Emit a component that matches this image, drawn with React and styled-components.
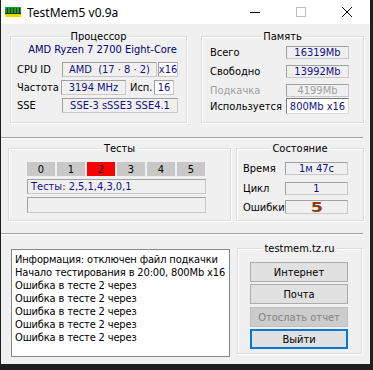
import styled, { createGlobalStyle } from "styled-components";

const GlobalStyle = createGlobalStyle`
  html, body {
    margin: 0;
    padding: 0;
    background: #1e1e1e;
  }
  body {
    font-family: "DejaVu Sans Condensed", "DejaVu Sans", sans-serif;
    font-size: 11px;
    color: #000;
  }
`;

const Window = styled.div`
  width: 369px;
  height: 364px;
  margin-left: 1px;
  background: #f0f0f0;
  display: flex;
  flex-direction: column;
  overflow: hidden;
`;

const TitleBar = styled.div`
  height: 24px;
  background: #fff;
  display: flex;
  align-items: center;
  flex-shrink: 0;
`;

const AppIcon = styled.svg`
  margin-left: 4px;
  margin-right: 6px;
`;

const Title = styled.div`
  flex: 1;
  font-family: "Noto Sans", "Open Sans", sans-serif;
  font-size: 12px;
  color: #000;
`;

const Control = styled.div`
  width: 46px;
  height: 24px;
  display: flex;
  align-items: center;
  justify-content: center;
`;

const Row = styled.div`
  display: flex;
  padding-left: ${(p) => p.$pl}px;
  margin-top: ${(p) => p.$mt}px;
  gap: ${(p) => p.$gap}px;
`;

const Separator = styled.div`
  width: 362px;
  height: 1px;
  background: #a0a0a0;
  border-bottom: 1px solid #fff;
  margin-top: ${(p) => p.$mt}px;
`;

const Group = styled.div`
  position: relative;
  box-sizing: border-box;
  width: ${(p) => p.$w}px;
  height: ${(p) => p.$h}px;
  border: 1px solid #dcdcdc;
  box-shadow: inset 1px 1px 0 #fff, 1px 1px 0 #fff;
  padding: ${(p) => p.$pad || "0"};
`;

const Caption = styled.div`
  position: absolute;
  top: -7px;
  left: 50%;
  transform: translateX(-50%);
  background: #f0f0f0;
  padding: 0 2px;
  line-height: 13px;
  white-space: nowrap;
`;

const CpuName = styled.div`
  text-align: center;
  color: #000080;
  line-height: 14px;
  margin-top: 6px;
  padding-left: 8px;
`;

const FormRow = styled.div`
  display: flex;
  align-items: center;
  margin-top: ${(p) => p.$mt}px;
  padding-left: ${(p) => p.$pl || 0}px;
`;

const Label = styled.div`
  width: ${(p) => p.$w}px;
  flex-shrink: 0;
  padding-left: ${(p) => p.$pl || 0}px;
  box-sizing: border-box;
  color: ${(p) => (p.$disabled ? "#a0a0a0" : "#000")};
  white-space: nowrap;
`;

const Field = styled.div`
  box-sizing: border-box;
  width: ${(p) => p.$w}px;
  height: ${(p) => p.$h || 15}px;
  margin-left: ${(p) => p.$ml || 0}px;
  border: 1px solid #c8c8c8;
  border-top-color: #a0a0a0;
  border-left-color: #a0a0a0;
  background: ${(p) => (p.$white ? "#fff" : "#f0f0f0")};
  color: ${(p) => (p.$disabled ? "#a0a0a0" : "#10108a")};
  display: flex;
  align-items: center;
  justify-content: ${(p) => (p.$left ? "flex-start" : "center")};
  padding-left: ${(p) => (p.$left ? 3 : 0)}px;
  white-space: nowrap;
  line-height: 1;
  flex-shrink: 0;
`;

const StrongField = styled(Field)`
  border: 1px solid #7a7a7a;
  border-right-color: #dcdcdc;
  border-bottom-color: #dcdcdc;
`;

const ErrorCount = styled.span`
  font-family: "DejaVu Sans", sans-serif;
  font-weight: bold;
  font-size: 14px;
  color: #8e3a10;
  transform: scaleX(1.25);
`;

const Cells = styled.div`
  display: flex;
  gap: 2px;
  margin-top: 13px;
`;

const Cell = styled.div`
  width: 28px;
  height: 14px;
  background: ${(p) => (p.$active ? "#ff0000" : "#c8c8c8")};
  display: flex;
  align-items: center;
  justify-content: center;
  line-height: 1;
`;

const LogBox = styled.div`
  box-sizing: border-box;
  width: 219px;
  height: 108px;
  margin-top: 1px;
  background: #fff;
  border: 1px solid #828790;
  padding: 3px 0 0 3px;
  line-height: 13px;
  letter-spacing: -0.15px;
  white-space: nowrap;
  overflow: hidden;
`;

const Button = styled.div`
  box-sizing: border-box;
  width: 98px;
  height: 20px;
  margin-top: ${(p) => p.$mt}px;
  background: ${(p) => (p.$disabled ? "#cccccc" : "#e1e1e1")};
  border: ${(p) => (p.$focused ? "2px solid #0078d7" : p.$disabled ? "1px solid #bfbfbf" : "1px solid #adadad")};
  color: ${(p) => (p.$disabled ? "#838383" : "#000")};
  display: flex;
  align-items: center;
  justify-content: center;
`;

const Column = styled.div`
  display: flex;
  flex-direction: column;
`;

const logLines = [
  "Информация: отключен файл подкачки",
  "Начало тестирования в 20:00, 800Mb x16",
  "Ошибка в тесте 2 через",
  "Ошибка в тесте 2 через",
  "Ошибка в тесте 2 через",
  "Ошибка в тесте 2 через",
  "Ошибка в тесте 2 через",
];

const App = () => {
  return (
    <>
      <GlobalStyle />
      <Window>
        <TitleBar>
          <AppIcon width="16" height="10" viewBox="0 0 16 10">
            <rect x="0" y="0" width="16" height="7" fill="#1f9a2a" />
            <rect x="0" y="7" width="16" height="3" fill="#e8d800" />
            {[2, 5, 8, 11, 14].map((x) => (
              <rect key={x} x={x} y="1" width="1" height="5" fill="#0b3d10" />
            ))}
            <rect x="0" y="6" width="16" height="1" fill="#0b3d10" />
          </AppIcon>
          <Title>TestMem5 v0.9a</Title>
          <Control>
            <svg width="10" height="1" viewBox="0 0 10 1">
              <rect width="10" height="1" fill="#000" />
            </svg>
          </Control>
          <Control>
            <svg width="10" height="10" viewBox="0 0 10 10">
              <rect x="0.5" y="0.5" width="9" height="9" fill="none" stroke="#c0c0c0" />
            </svg>
          </Control>
          <Control>
            <svg width="10" height="10" viewBox="0 0 10 10">
              <path d="M0 0L10 10M10 0L0 10" stroke="#000" strokeWidth="1" />
            </svg>
          </Control>
        </TitleBar>

        <Row $pl={9} $mt={12} $gap={14}>
          <Group $w={177} $h={87}>
            <Caption>Процессор</Caption>
            <CpuName>AMD Ryzen 7 2700 Eight-Core</CpuName>
            <FormRow $mt={5} $pl={6}>
              <Label $w={45}>CPU ID</Label>
              <Field $w={95}>AMD&nbsp;&nbsp;(17 · 8 · 2)</Field>
              <Field $w={20} $ml={1} $white>x16</Field>
            </FormRow>
            <FormRow $mt={3} $pl={6}>
              <Label $w={44}>Частота</Label>
              <Field $w={65}>3194 MHz</Field>
              <Label $w={28} $pl={4}>Исп.</Label>
              <Field $w={20} $white>16</Field>
            </FormRow>
            <FormRow $mt={3} $pl={6}>
              <Label $w={45}>SSE</Label>
              <Field $w={116}>SSE-3 sSSE3 SSE4.1</Field>
            </FormRow>
          </Group>

          <Group $w={163} $h={87}>
            <Caption>Память</Caption>
            <FormRow $mt={9} $pl={8}>
              <Label $w={76}>Всего</Label>
              <Field $w={63} $h={13}>16319Mb</Field>
            </FormRow>
            <FormRow $mt={6} $pl={8}>
              <Label $w={76}>Свободно</Label>
              <Field $w={63} $h={13}>13992Mb</Field>
            </FormRow>
            <FormRow $mt={6} $pl={8}>
              <Label $w={76} $disabled>Подкачка</Label>
              <Field $w={63} $h={13} $disabled>4199Mb</Field>
            </FormRow>
            <FormRow $mt={1} $pl={8}>
              <Label $w={76}>Используется</Label>
              <StrongField $w={63} $h={16} $white>800Mb x16</StrongField>
            </FormRow>
          </Group>
        </Row>

        <Separator $mt={14} />

        <Row $pl={7} $mt={9} $gap={5}>
          <Group $w={223} $h={73} $pad="0 0 0 18px">
            <Caption>Тесты</Caption>
            <Cells>
              {[0, 1, 2, 3, 4, 5].map((n) => (
                <Cell key={n} $active={n === 2}>{n}</Cell>
              ))}
            </Cells>
            <FormRow $mt={3}>
              <Field $w={179} $left>Тесты: 2,5,1,4,3,0,1</Field>
            </FormRow>
            <FormRow $mt={3}>
              <Field $w={179} $h={16} />
            </FormRow>
          </Group>

          <Group $w={128} $h={73} $pad="0 0 0 6px">
            <Caption>Состояние</Caption>
            <FormRow $mt={13}>
              <Label $w={42}>Время</Label>
              <Field $w={63} $h={13}>1м 47с</Field>
            </FormRow>
            <FormRow $mt={7}>
              <Label $w={42}>Цикл</Label>
              <Field $w={63} $h={13}>1</Field>
            </FormRow>
            <FormRow $mt={5}>
              <Label $w={42}>Ошибки</Label>
              <Field $w={63} $h={14}>
                <ErrorCount>5</ErrorCount>
              </Field>
            </FormRow>
          </Group>
        </Row>

        <Separator $mt={12} />

        <Row $pl={10} $mt={13} $gap={7}>
          <LogBox>
            {logLines.map((line, i) => (
              <div key={i}>{line}</div>
            ))}
          </LogBox>
          <Group $w={125} $h={106} $pad="0 0 0 12px">
            <Caption>testmem.tz.ru</Caption>
            <Column>
              <Button $mt={13}>Интернет</Button>
              <Button $mt={2}>Почта</Button>
              <Button $mt={3} $disabled>Отослать отчет</Button>
              <Button $mt={2} $focused>Выйти</Button>
            </Column>
          </Group>
        </Row>
      </Window>
    </>
  );
};

export default App;
